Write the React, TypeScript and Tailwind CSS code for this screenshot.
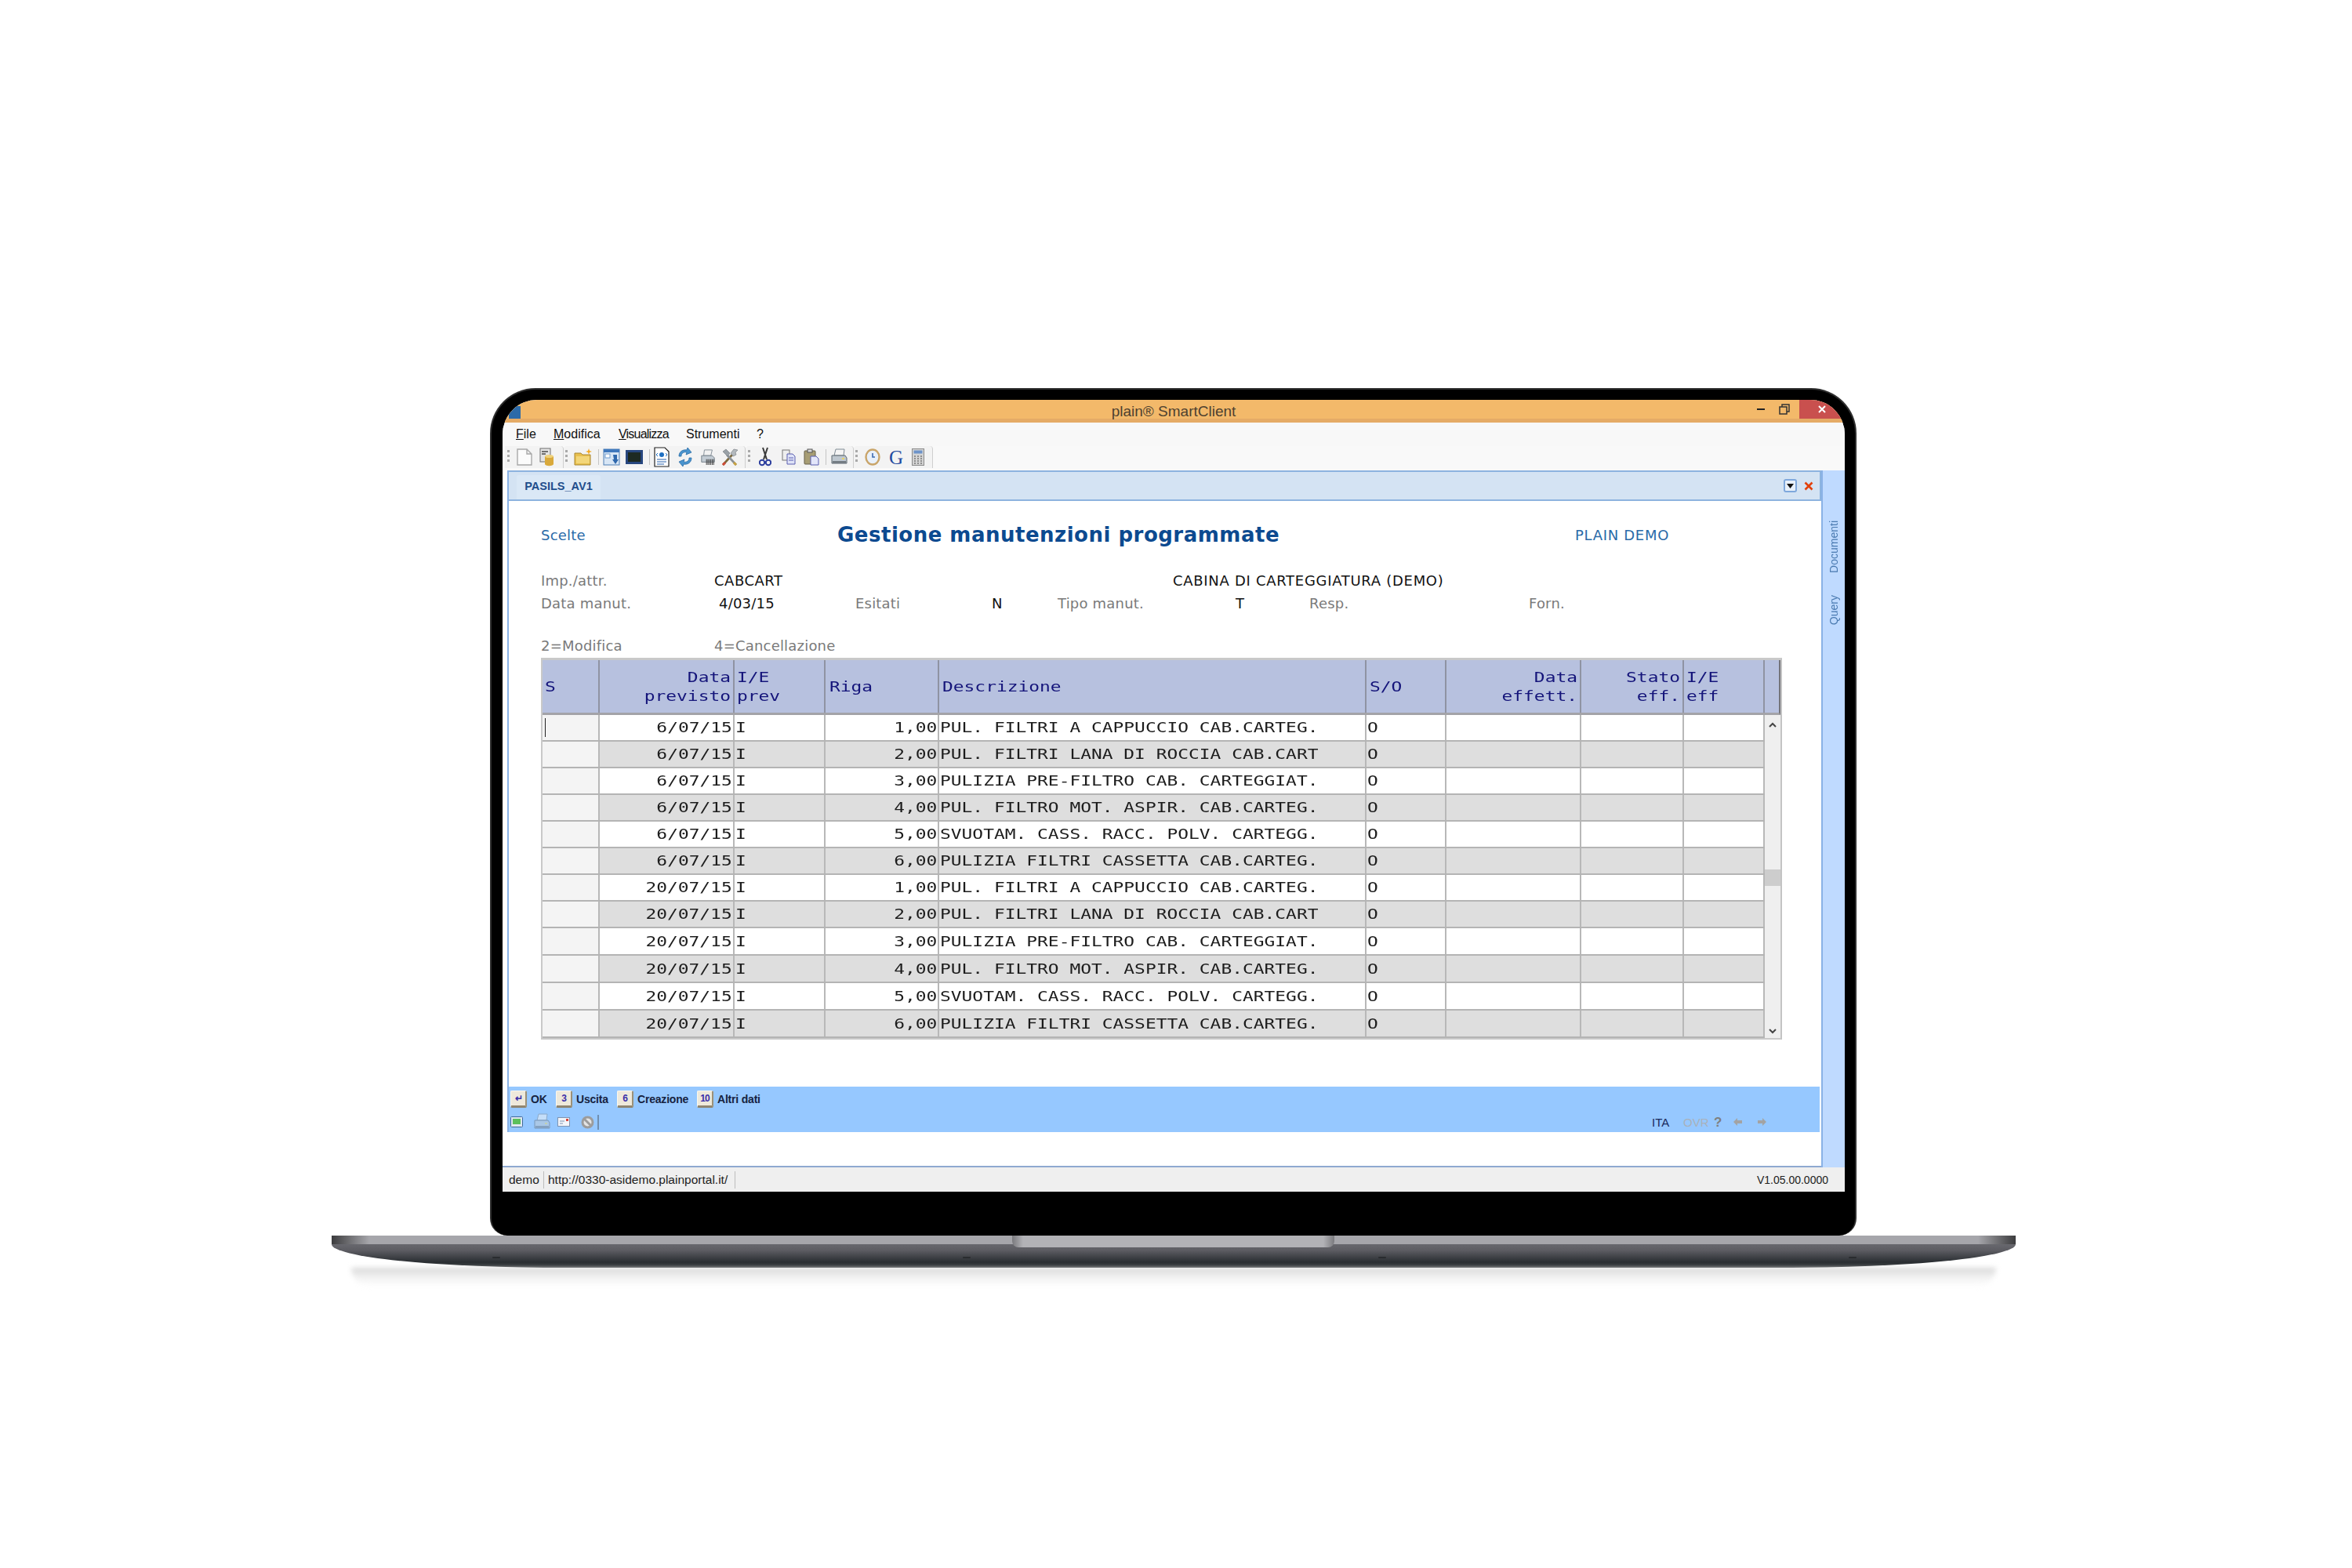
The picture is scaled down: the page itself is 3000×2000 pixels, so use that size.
const monoFont = "font-['DejaVu_Sans_Mono',monospace]";

const rows = [
  ["6/07/15", "1,00", "PUL. FILTRI A CAPPUCCIO CAB.CARTEG."],
  ["6/07/15", "2,00", "PUL. FILTRI LANA DI ROCCIA CAB.CART"],
  ["6/07/15", "3,00", "PULIZIA PRE-FILTRO CAB. CARTEGGIAT."],
  ["6/07/15", "4,00", "PUL. FILTRO MOT. ASPIR. CAB.CARTEG."],
  ["6/07/15", "5,00", "SVUOTAM. CASS. RACC. POLV. CARTEGG."],
  ["6/07/15", "6,00", "PULIZIA FILTRI CASSETTA CAB.CARTEG."],
  ["20/07/15", "1,00", "PUL. FILTRI A CAPPUCCIO CAB.CARTEG."],
  ["20/07/15", "2,00", "PUL. FILTRI LANA DI ROCCIA CAB.CART"],
  ["20/07/15", "3,00", "PULIZIA PRE-FILTRO CAB. CARTEGGIAT."],
  ["20/07/15", "4,00", "PUL. FILTRO MOT. ASPIR. CAB.CARTEG."],
  ["20/07/15", "5,00", "SVUOTAM. CASS. RACC. POLV. CARTEGG."],
  ["20/07/15", "6,00", "PULIZIA FILTRI CASSETTA CAB.CARTEG."],
];

const gridCols = "grid grid-cols-[73px_172px_116px_145px_545px_102px_172px_131px_103px]";

// the source glyphs are horizontally stretched, so the mono text gets a scale-x
function MonoL({ children }: { children?: React.ReactNode }) {
  return <div className={`${monoFont} origin-left scale-x-[1.272] whitespace-pre text-[18px] leading-[24px]`}>{children}</div>;
}

function MonoR({ children }: { children?: React.ReactNode }) {
  return <div className={`${monoFont} origin-right scale-x-[1.272] whitespace-pre text-right text-[18px] leading-[24px]`}>{children}</div>;
}

function Grip() {
  return (
    <svg width="6" height="20" viewBox="0 0 6 20">
      <rect x="1" y="1" width="3" height="3" fill="#a9a9a9" />
      <rect x="1" y="7" width="3" height="3" fill="#a9a9a9" />
      <rect x="1" y="13" width="3" height="3" fill="#a9a9a9" />
    </svg>
  );
}

function Sep() {
  return <div className="h-[20px] w-px bg-[#c4c4c4]" />;
}

function Box({ w, children }: { w: string; children: React.ReactNode }) {
  return <div className={`flex h-full shrink-0 items-center justify-center ${w}`}>{children}</div>;
}

function DocIcon() {
  return (
    <svg width="22" height="24" viewBox="0 0 22 24">
      <path d="M2 2h12l6 6v14H2z M14 2v6h6" fill="#fbfbfb" stroke="#a8a8a8" strokeWidth="1.4" />
    </svg>
  );
}

function DbIcon() {
  return (
    <svg width="20" height="24" viewBox="0 0 20 24">
      <rect x="1" y="1" width="13" height="17" fill="#e4e4e4" stroke="#6f6f6f" />
      <path d="M3 5h8M3 8h5" stroke="#4a4a4a" strokeWidth="1.5" />
      <path d="M7 11h11v10a5 2 0 0 1-11 0z" fill="#d9a93b" />
      <ellipse cx="12.5" cy="11" rx="5.5" ry="2" fill="#f0d27a" />
    </svg>
  );
}

function FolderIcon() {
  return (
    <svg width="24" height="24" viewBox="0 0 24 24">
      <path d="M1 7h8l2 2h10v13H1z" fill="#e8c04e" stroke="#a98630" />
      <path d="M3 11h17v9H3z" fill="#f3d679" />
      <path d="M19 1l1 3 3 1-3 1-1 3-1-3-3-1 3-1z" fill="#f4a91f" />
    </svg>
  );
}

function WinIcon() {
  return (
    <svg width="22" height="22" viewBox="0 0 22 22">
      <rect x="1" y="1" width="20" height="20" fill="#d8e6f5" stroke="#4f7fb5" />
      <rect x="1" y="1" width="20" height="4" fill="#3f78bd" />
      <rect x="3" y="7" width="6" height="5" fill="#fff" stroke="#6f9bd0" />
      <path d="M13 8h5v6l2 0-4 6-4-6h2z" fill="#2f68ad" />
    </svg>
  );
}

function MonitorIcon() {
  return (
    <svg width="22" height="18" viewBox="0 0 22 18">
      <rect x="0.5" y="0.5" width="21" height="17" fill="#27467e" stroke="#27467e" />
      <rect x="3" y="3" width="16" height="12" fill="#1d2a22" />
    </svg>
  );
}

function CodeIcon() {
  return (
    <svg width="20" height="26" viewBox="0 0 20 26">
      <path d="M1 1h13l5 5v19H1z" fill="#fff" stroke="#222" strokeWidth="1.2" />
      <circle cx="10" cy="10" r="3" fill="#1e6fc2" />
      <path d="M5 8l-2 2 2 2M15 8l2 2-2 2" stroke="#1e6fc2" fill="none" />
      <path d="M4 16h12M4 19h12M4 22h9" stroke="#6f95c8" strokeWidth="1.3" />
    </svg>
  );
}

function RefreshIcon() {
  return (
    <svg width="20" height="26" viewBox="0 0 20 26">
      <path d="M2 12c0-6 5-9 10-8l1-3 5 6-7 3 1-3c-4-1-7 1-7 5z" fill="#4a95cf" stroke="#2a6ca6" strokeWidth="0.8" />
      <path d="M18 14c0 6-5 9-10 8l-1 3-5-6 7-3-1 3c4 1 7-1 7-5z" fill="#4a95cf" stroke="#2a6ca6" strokeWidth="0.8" />
    </svg>
  );
}

function BarcodePrinter() {
  return (
    <svg width="22" height="24" viewBox="0 0 22 24">
      <path d="M6 2h11l-2 8H5z" fill="#f2f2f2" stroke="#7f8a93" />
      <path d="M2 10h15l3 3v6H2z" fill="#c3ccd4" stroke="#6f7a84" />
      <path d="M9 15v8M11 15v8M13 15v8M15 15v8M17 15v8M19 15v8" stroke="#333" strokeWidth="1" />
    </svg>
  );
}

function ToolsIcon() {
  return (
    <svg width="24" height="24" viewBox="0 0 24 24">
      <path d="M3 22L15 9" stroke="#7c6a3e" strokeWidth="2.6" />
      <path d="M3 22l3-3" stroke="#d14a36" strokeWidth="3" />
      <path d="M20 22L8 9" stroke="#8a9096" strokeWidth="2.6" />
      <path d="M20 22l-3-3" stroke="#c9a23f" strokeWidth="3" />
      <path d="M3 5l4-3 5 5-3 4z" fill="#9aa1a7" stroke="#6e757b" strokeWidth="0.6" />
      <path d="M13 7l4-5 5 1-3 3 1 3-4 2z" fill="#b3b9be" stroke="#6e757b" strokeWidth="0.6" />
    </svg>
  );
}

function ScissorsIcon() {
  return (
    <svg width="16" height="26" viewBox="0 0 16 26">
      <path d="M5 1l5 15M11 1L6 16" stroke="#3a3a3a" strokeWidth="2" />
      <circle cx="4" cy="20" r="3.2" fill="none" stroke="#2d3f9e" strokeWidth="2" />
      <circle cx="12" cy="20" r="3.2" fill="none" stroke="#2d3f9e" strokeWidth="2" />
    </svg>
  );
}

function CopyIcon() {
  return (
    <svg width="18" height="20" viewBox="0 0 18 20">
      <rect x="1" y="1" width="9" height="13" fill="#eee" stroke="#777" />
      <path d="M7 6h7l3 3v10H7z" fill="#dfe3f7" stroke="#5a5fb0" />
      <path d="M9 11h6M9 14h6" stroke="#5a5fb0" />
    </svg>
  );
}

function PasteIcon() {
  return (
    <svg width="20" height="22" viewBox="0 0 20 22">
      <rect x="1" y="3" width="14" height="17" rx="1" fill="#a79d74" stroke="#66614a" />
      <rect x="5" y="1" width="6" height="4" fill="#d9d9d9" stroke="#555" />
      <path d="M9 10h7l3 3v8H9z" fill="#e3e6fa" stroke="#5a5fb0" />
    </svg>
  );
}

function PrintIcon({ faded }: { faded?: boolean }) {
  return (
    <svg width="22" height="22" viewBox="0 0 22 22" className={faded ? "opacity-50" : ""}>
      <path d="M7 1h11l-1 8H5z" fill="#f5f5f5" stroke="#7f8a93" />
      <path d="M2 9h17l2 3v7H2z" fill="#bfc8d0" stroke="#5e6870" />
      <path d="M3 16h17v3H3z" fill="#747c83" />
      <rect x="15" y="12" width="3" height="2" fill="#e9d46a" />
    </svg>
  );
}

function ClockIcon() {
  return (
    <svg width="20" height="22" viewBox="0 0 20 22">
      <ellipse cx="10" cy="11" rx="8.5" ry="9.5" fill="#e8f0fa" stroke="#c9a56a" strokeWidth="2.4" />
      <path d="M10 6v5l3 0" stroke="#3a69b0" strokeWidth="1.6" fill="none" />
    </svg>
  );
}

function CalcIcon() {
  return (
    <svg width="16" height="22" viewBox="0 0 16 22">
      <rect x="0.5" y="0.5" width="15" height="21" fill="#d4d4d4" stroke="#8a8a8a" />
      <rect x="2.5" y="2.5" width="11" height="4" fill="#6d93c9" />
      <path d="M3 10h2M7 10h2M11 10h2M3 13h2M7 13h2M11 13h2M3 16h2M7 16h2M11 16h2M3 19h2M7 19h2M11 19h2" stroke="#777" strokeWidth="1.6" />
    </svg>
  );
}

function Key({ label }: { label: React.ReactNode }) {
  return (
    <div className="flex h-[22px] w-[21px] shrink-0 items-center justify-center rounded-[2px] border-r-2 border-b-[3px] border-l border-t border-r-[#9a9078] border-b-[#8f8570] border-l-[#fbf8ee] border-t-[#fbf8ee] bg-[#eee9db] font-['Liberation_Sans',sans-serif] text-[12px] font-bold leading-none tracking-[-1px] text-[#3b2fa8]">
      {label}
    </div>
  );
}

function ActionKey({ label, text, w }: { label: React.ReactNode; text: string; w: string }) {
  return (
    <div className={`flex shrink-0 items-center gap-[5px] ${w}`}>
      <Key label={label} />
      <span className="font-['Liberation_Sans',sans-serif] text-[14px] font-bold leading-none tracking-[-0.2px] text-[#16233f]">{text}</span>
    </div>
  );
}

function Toolbar() {
  return (
    <div className="flex h-[31px] items-stretch bg-[#f9f9f9] pl-[3px] pb-[3px]">
      <div className="flex w-[75px] items-center rounded-tr-[4px] border-r border-[#cfcfcf] bg-[#f3f3f3]">
        <Box w="w-[10px]"><Grip /></Box>
        <Box w="w-[30px]"><DocIcon /></Box>
        <Box w="w-[28px]"><DbIcon /></Box>
      </div>
      <div className="flex w-[232px] items-center rounded-t-[4px] border-r border-[#cfcfcf] bg-[#f3f3f3]">
        <Box w="w-[8px]"><Grip /></Box>
        <Box w="w-[34px]"><FolderIcon /></Box>
        <Box w="w-[4px]"><Sep /></Box>
        <Box w="w-[30px]"><WinIcon /></Box>
        <Box w="w-[28px]"><MonitorIcon /></Box>
        <Box w="w-[10px]"><Sep /></Box>
        <Box w="w-[22px]"><CodeIcon /></Box>
        <Box w="w-[38px]"><RefreshIcon /></Box>
        <Box w="w-[20px]"><BarcodePrinter /></Box>
        <Box w="w-[36px]"><ToolsIcon /></Box>
      </div>
      <div className="flex w-[138px] items-center rounded-t-[4px] border-r border-[#cfcfcf] bg-[#f3f3f3]">
        <Box w="w-[10px]"><Grip /></Box>
        <Box w="w-[30px]"><ScissorsIcon /></Box>
        <Box w="w-[30px]"><CopyIcon /></Box>
        <Box w="w-[28px]"><PasteIcon /></Box>
        <Box w="w-[8px]"><Sep /></Box>
        <Box w="w-[26px]"><PrintIcon /></Box>
      </div>
      <div className="flex w-[101px] items-center rounded-t-[4px] border-r border-[#cfcfcf] bg-[#f3f3f3]">
        <Box w="w-[8px]"><Grip /></Box>
        <Box w="w-[32px]"><ClockIcon /></Box>
        <Box w="w-[28px]">
          <span className="font-['Liberation_Serif',serif] text-[25px] leading-none text-[#1f4aa0]">G</span>
        </Box>
        <Box w="w-[28px]"><CalcIcon /></Box>
      </div>
    </div>
  );
}

function DataTable() {
  return (
    <div className="flex w-[1583px] border-2 border-t-[3px] border-[#c9c9c9] border-r-[#c4c4c4]">
      <div className="w-[1559px]">
        <div className={`${gridCols} h-[70px] border-b-[3px] border-[#a3a3a8] bg-[#b7c1df] text-[#14147a]`}>
          <div className="flex items-center border-r-2 border-[#8f93a3] pl-[3px]"><MonoL>S</MonoL></div>
          <div className="flex flex-col justify-center border-r-2 border-[#8f93a3] pr-[3px]"><MonoR>Data</MonoR><MonoR>previsto</MonoR></div>
          <div className="flex flex-col justify-center border-r-2 border-[#8f93a3] pl-[3px]"><MonoL>I/E</MonoL><MonoL>prev</MonoL></div>
          <div className="flex items-center border-r-2 border-[#8f93a3] pl-[5px]"><MonoL>Riga</MonoL></div>
          <div className="flex items-center border-r-2 border-[#8f93a3] pl-[4px]"><MonoL>Descrizione</MonoL></div>
          <div className="flex items-center border-r-2 border-[#8f93a3] pl-[4px]"><MonoL>S/O</MonoL></div>
          <div className="flex flex-col justify-center border-r-2 border-[#8f93a3] pr-[3px]"><MonoR>Data</MonoR><MonoR>effett.</MonoR></div>
          <div className="flex flex-col justify-center border-r-2 border-[#8f93a3] pr-[3px]"><MonoR>Stato</MonoR><MonoR>eff.</MonoR></div>
          <div className="flex flex-col justify-center border-r-2 border-[#8f93a3] pl-[3px]"><MonoL>I/E</MonoL><MonoL>eff</MonoL></div>
        </div>
        {rows.map((r, i) => (
          <div
            key={i}
            className={`${gridCols} border-b-2 border-[#b4b4b4] text-[#1c1c1c] ${i < 8 ? "h-[34px]" : "h-[35px]"} ${i % 2 === 0 ? "bg-white" : "bg-[#dedede]"}`}
          >
            <div className="flex items-center border-r-2 border-[#b8b8b8] bg-[#f4f4f4] pl-[3px]">
              {i === 0 && <div className="h-[24px] w-px bg-[#222]" />}
            </div>
            <div className="flex items-center justify-end border-r-2 border-[#b8b8b8] pr-[1px]"><MonoR>{r[0]}</MonoR></div>
            <div className="flex items-center border-r-2 border-[#b8b8b8] pl-[1px]"><MonoL>I</MonoL></div>
            <div className="flex items-center justify-end border-r-2 border-[#b8b8b8] pr-[1px]"><MonoR>{r[1]}</MonoR></div>
            <div className="flex items-center border-r-2 border-[#b8b8b8] pl-[1px]"><MonoL>{r[2]}</MonoL></div>
            <div className="flex items-center border-r-2 border-[#b8b8b8] pl-[1px]"><MonoL>O</MonoL></div>
            <div className="border-r-2 border-[#b8b8b8]" />
            <div className="border-r-2 border-[#b8b8b8]" />
            <div className="border-r-2 border-[#b8b8b8]" />
          </div>
        ))}
      </div>
      <div className="flex w-[20px] flex-col">
        <div className="h-[70px] border-b-[3px] border-r-2 border-[#a3a3a8] border-r-[#74747a] bg-[#b7c1df]" />
        <div className="flex flex-1 flex-col items-center bg-[#efefef]">
          <svg width="12" height="8" viewBox="0 0 12 8" className="mt-[9px]"><path d="M2 6l4-4 4 4" fill="none" stroke="#444" strokeWidth="2" /></svg>
          <div className="mt-[180px] h-[21px] w-full bg-[#cdcdcd]" />
          <svg width="12" height="8" viewBox="0 0 12 8" className="mt-auto mb-[5px]"><path d="M2 2l4 4 4-4" fill="none" stroke="#444" strokeWidth="2" /></svg>
        </div>
      </div>
    </div>
  );
}

function FormArea() {
  const label = "text-[18px] leading-[28px] text-[#7a7a7a] shrink-0";
  const value = "text-[18px] leading-[28px] text-[#111] shrink-0";
  return (
    <div className="min-h-0 flex-1 bg-white pl-[41px] font-['DejaVu_Sans',sans-serif] tracking-[0.2px]">
      <div className="mt-[28px] flex h-[30px] items-center">
        <div className="w-[378px] shrink-0 text-[18px] text-[#2a6aa8]">Scelte</div>
        <div className="w-[941px] shrink-0 text-[26px] font-bold tracking-[0.5px] text-[#0c4a90]">Gestione manutenzioni programmate</div>
        <div className="text-[18px] tracking-[0.7px] text-[#2a6aa8]">PLAIN DEMO</div>
      </div>
      <div className="mt-[30px] flex">
        <div className={`${label} w-[221px]`}>Imp./attr.</div>
        <div className={`${value} w-[585px] tracking-[0.5px]`}>CABCART</div>
        <div className={`${value} tracking-[0.7px]`}>CABINA DI CARTEGGIATURA (DEMO)</div>
      </div>
      <div className="mt-px flex">
        <div className={`${label} w-[227px]`}>Data manut.</div>
        <div className={`${value} w-[174px]`}>4/03/15</div>
        <div className={`${label} w-[174px]`}>Esitati</div>
        <div className={`${value} w-[84px]`}>N</div>
        <div className={`${label} w-[227px]`}>Tipo manut.</div>
        <div className={`${value} w-[94px]`}>T</div>
        <div className={`${label} w-[280px]`}>Resp.</div>
        <div className={label}>Forn.</div>
      </div>
      <div className="mt-[26px] flex">
        <div className={`${label} w-[221px]`}>2=Modifica</div>
        <div className={label}>4=Cancellazione</div>
      </div>
      <div className="mt-px tracking-normal">
        <DataTable />
      </div>
    </div>
  );
}

function ActionBar() {
  return (
    <div className="mr-[2px] h-[58px] bg-[#96c8ff]">
      <div className="flex h-[32px] items-center pl-[2px]">
        <ActionKey label="↵" text="OK" w="w-[58px]" />
        <ActionKey label="3" text="Uscita" w="w-[78px]" />
        <ActionKey label="6" text="Creazione" w="w-[102px]" />
        <ActionKey label="10" text="Altri dati" w="w-[90px]" />
      </div>
      <div className="flex h-[26px] items-center pl-[2px] pr-[67px]">
        <div className="flex w-[29px] justify-start">
          <svg width="16" height="14" viewBox="0 0 16 14"><rect x="0.5" y="0.5" width="15" height="13" rx="1" fill="#dfe8f2" stroke="#41699a" /><rect x="3" y="3" width="10" height="7" fill="#5cc05c" /></svg>
        </div>
        <div className="flex w-[31px] justify-start"><PrintIcon faded /></div>
        <div className="flex w-[30px] justify-start">
          <svg width="16" height="12" viewBox="0 0 16 12"><rect x="0.5" y="0.5" width="15" height="11" fill="#f2f5fa" stroke="#7f93b0" /><path d="M3 5h6M3 8h4" stroke="#7f93b0" /><rect x="11" y="2" width="3" height="3" fill="#d8453a" /></svg>
        </div>
        <div className="flex w-[21px] justify-start">
          <svg width="17" height="17" viewBox="0 0 17 17"><circle cx="8.5" cy="8.5" r="6.5" fill="#e4e4e4" stroke="#9c9c9c" strokeWidth="3" /><path d="M4 4l9 9" stroke="#9c9c9c" strokeWidth="3" /></svg>
        </div>
        <div className="h-[19px] w-[2px] bg-[#6f8eb0]" />
        <div className="ml-auto flex items-center font-['Liberation_Sans',sans-serif] text-[15px] leading-none">
          <span className="w-[40px] text-[#1a2a5c]">ITA</span>
          <span className="w-[39px] text-[#a9b1ba]">OVR</span>
          <span className="w-[24px] text-[17px] font-bold text-[#7f7f7f]">?</span>
          <svg width="13" height="12" viewBox="0 0 13 12" className="mr-[18px]"><path d="M1 6l5-5v3h6v4H6v3z" fill="#a3a3a3" /></svg>
          <svg width="13" height="12" viewBox="0 0 13 12"><path d="M12 6L7 1v3H1v4h6v3z" fill="#a3a3a3" /></svg>
        </div>
      </div>
    </div>
  );
}

function Sidebar() {
  return (
    <div className="flex w-[30px] shrink-0 flex-col items-center border-l-2 border-[#8ab2e6] bg-[#bfdaff] pt-[64px] font-['Liberation_Sans',sans-serif] text-[14px] leading-none text-[#4a7ab0]">
      <div className="rotate-180 [writing-mode:vertical-rl]">Documenti</div>
      <div className="mt-[28px] rotate-180 [writing-mode:vertical-rl]">Query</div>
    </div>
  );
}

function Screen() {
  return (
    <div className="flex h-[1010px] w-[1712px] flex-col overflow-hidden rounded-t-[44px] bg-white">
      {/* title bar */}
      <div className="relative flex h-[29px] shrink-0 items-start justify-center border-b-[5px] border-[#e5ab66] bg-[#f3b96a]">
        <div className="absolute left-[8px] top-[8px] h-[16px] w-[15px] bg-[#2c6aa8]" />
        <span className="pt-[3px] font-['Liberation_Sans',sans-serif] text-[19px] leading-[24px] text-[#4e4130]">plain® SmartClient</span>
        <div className="absolute right-0 top-0 flex h-[24px] items-center">
          <div className="h-[2px] w-[10px] bg-[#222]" />
          <svg width="14" height="14" viewBox="0 0 14 14" className="ml-[18px]"><path d="M1 4h9v9H1z M4 4V1h9v9h-3" fill="none" stroke="#333" strokeWidth="1.5" /></svg>
          <div className="ml-[12px] flex h-[24px] w-[58px] items-center justify-center bg-[#c9504e]">
            <svg width="12" height="12" viewBox="0 0 12 12"><path d="M2 2l8 8M10 2l-8 8" stroke="#fff" strokeWidth="2" /></svg>
          </div>
        </div>
      </div>
      {/* menu */}
      <div className="flex h-[30px] shrink-0 items-center bg-[#f8f8f8] pl-[17px] font-['Liberation_Sans',sans-serif] text-[16px] leading-none text-[#111]">
        <span className="w-[48px]"><span className="underline">F</span>ile</span>
        <span className="w-[83px]"><span className="underline">M</span>odifica</span>
        <span className="w-[86px] tracking-[-0.8px]"><span className="underline">V</span>isualizza</span>
        <span className="w-[90px]">Strumenti</span>
        <span>?</span>
      </div>
      <Toolbar />
      {/* body */}
      <div className="flex h-[889px] shrink-0">
        <div className="flex min-w-0 flex-1 flex-col border-b-2 border-[#8fa9d0] bg-white">
          <div className="ml-[6px] flex h-[844px] shrink-0 flex-col border-l-2 border-[#8ab2e6]">
            <div className="flex h-[39px] shrink-0 items-end justify-between border-y-2 border-[#8db3df] border-r-2 bg-[#d4e3f3] pl-[10px] pr-[8px]">
              <div className="flex h-[31px] w-[107px] items-center justify-center rounded-t-[3px] bg-[#dae8f6] pb-[2px] font-['Liberation_Sans',sans-serif] text-[14.5px] font-bold leading-none text-[#1f4e8c]">PASILS_AV1</div>
              <div className="flex h-full items-center gap-[9px]">
                <div className="flex h-[17px] w-[17px] items-center justify-center rounded-[3px] border-2 border-[#7fa8dc] bg-[#e8f0fa]">
                  <svg width="9" height="6" viewBox="0 0 9 6"><path d="M0 0h9L4.500 6z" fill="#111" /></svg>
                </div>
                <svg width="12" height="12" viewBox="0 0 12 12"><path d="M1.500 1.500l9 9M10.500 1.500l-9 9" stroke="#e2410c" strokeWidth="2.6" /></svg>
              </div>
            </div>
            <FormArea />
            <ActionBar />
          </div>
        </div>
        <Sidebar />
      </div>
      {/* status bar */}
      <div className="flex min-h-0 flex-1 items-center bg-[#efefef] pl-[8px] pr-[21px] font-['Liberation_Sans',sans-serif] text-[15.500px] leading-none text-[#222]">
        <span className="w-[44px]">demo</span>
        <div className="h-[22px] w-px bg-[#bdbdbd]" />
        <span className="ml-[5px] w-[238px]">http://0330-asidemo.plainportal.it/</span>
        <div className="h-[22px] w-px bg-[#bdbdbd]" />
        <span className="ml-auto text-[14px]">V1.05.00.0000</span>
      </div>
    </div>
  );
}

function Base() {
  return (
    <div className="relative w-[2148px]">
      <div className="h-[11px] bg-[linear-gradient(90deg,#3c3c3e_0px,#a6a6ab_48px,#a6a6ab_2100px,#3c3c3e_2148px)]" />
      <div className="h-[30px] rounded-b-[300px_30px] bg-[linear-gradient(180deg,#68686e_0%,#5d5d63_25%,#2b2f33_75%,#222629_100%)]" />
      {/* hinge notch */}
      <div className="absolute left-[868px] top-0 h-[15px] w-[411px] rounded-b-[8px] bg-[linear-gradient(90deg,#7a7a7e_0px,#b2b2b6_14px,#b2b2b6_397px,#7a7a7e_411px)]" />
      {/* feet */}
      <div className="absolute left-[205px] top-[27px] h-[2px] w-[10px] rounded-full bg-[#16181a]/50" />
      <div className="absolute left-[805px] top-[27px] h-[2px] w-[10px] rounded-full bg-[#16181a]/50" />
      <div className="absolute left-[1335px] top-[27px] h-[2px] w-[10px] rounded-full bg-[#16181a]/50" />
      <div className="absolute left-[1935px] top-[27px] h-[2px] w-[10px] rounded-full bg-[#16181a]/50" />
    </div>
  );
}

export default function App() {
  return (
    <div className="h-[2000px] w-[3000px] overflow-hidden bg-white pl-[423px] pt-[495px]">
      <div className="ml-[202px] flex h-[1081px] w-[1743px] justify-center rounded-t-[58px] rounded-b-[22px] border-x-2 border-t-2 border-[#2f2f2f] bg-black pl-[1px] pt-[13px]">
        <Screen />
      </div>
      <Base />
      <div className="ml-[25px] h-[24px] w-[2098px] rounded-b-[60px] bg-[linear-gradient(180deg,#d6d6d6_0%,#f0f0f0_45%,#ffffff_100%)] blur-[3px]" />
    </div>
  );
}
